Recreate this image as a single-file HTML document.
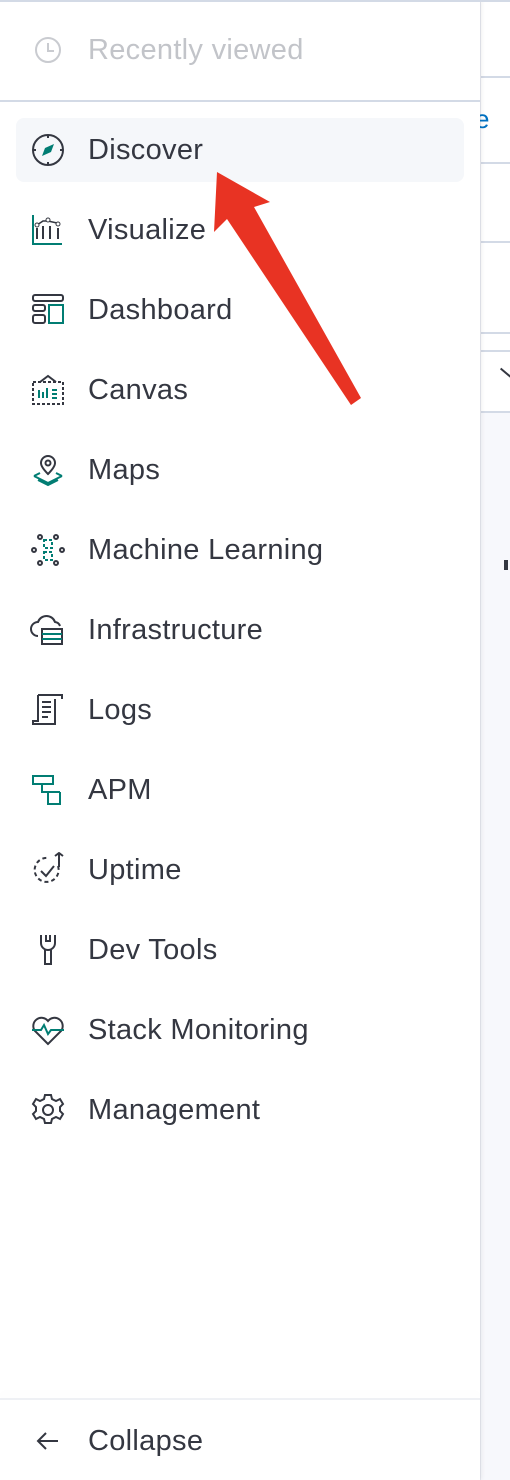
<!DOCTYPE html>
<html><head><meta charset="utf-8"><style>
*{margin:0;padding:0;box-sizing:border-box}
body{width:510px;height:1480px;position:relative;background:#fff;font-family:"Liberation Sans",sans-serif;overflow:hidden}
.side{position:absolute;left:480px;top:0;width:30px;height:1480px;background:#f7f8fc;border-left:1px solid #e6e9f0}
.side .w{position:absolute;left:0;width:30px;background:#fff}
.side .l{position:absolute;left:0;width:30px;height:2px;background:#d3dae6}
.panel{position:absolute;left:0;top:0;width:480px;height:1480px;background:#fff;box-shadow:2px 0 4px rgba(0,0,0,.06)}
.top{position:absolute;top:0;left:0;width:510px;height:2px;background:#d3dae6}
.item{position:absolute;left:0;width:480px;height:64px;display:flex;align-items:center;font-size:29px;letter-spacing:0.3px;color:#343741}
.item svg{position:absolute;left:30px;width:36px;height:36px}
.item span{position:absolute;left:88px}
.hl{position:absolute;left:16px;top:118px;width:448px;height:64px;background:#f5f7fa;border-radius:8px}
</style></head><body>
<div class="side">
<div class="w" style="top:0;height:412px"></div>
<div class="l" style="top:76px"></div>
<div class="l" style="top:162px"></div>
<div class="l" style="top:241px"></div>
<div class="l" style="top:332px"></div>
<div class="l" style="top:350px"></div>
<div class="l" style="top:411px"></div>
<div style="position:absolute;left:-6px;top:104px;color:#0071c2;font-size:26px">e</div>
<div style="position:absolute;left:18px;top:372px;width:14px;height:2px;background:#343741;transform:rotate(40deg)"></div>
<div style="position:absolute;left:23px;top:560px;width:4px;height:10px;background:#343741"></div>
</div>
<div class="panel">
<div style="position:absolute;top:100px;left:0;width:480px;height:2px;background:#d3dae6"></div>
<div class="hl"></div>
<div class="item" style="top:18px;color:#c2c4c9"><svg viewBox="0 0 36 36"><circle cx="18" cy="18" r="12" fill="none" stroke="#c9cbd0" stroke-width="2"/><path d="M18 11v8h6" fill="none" stroke="#c9cbd0" stroke-width="2"/></svg><span>Recently viewed</span></div>
<div class="item" style="top:118px"><svg viewBox="0 0 36 36"><circle cx="18" cy="18" r="15" fill="none" stroke="#343741" stroke-width="2"/><path d="M18 3v3M18 30v3M3 18h3M30 18h3" stroke="#343741" stroke-width="2"/><path d="M24 12l-9 4-3 8 9-4z" fill="#017d73"/></svg><span>Discover</span></div>
<div class="item" style="top:198px"><svg viewBox="0 0 36 36"><path d="M3 3v29h29" fill="none" stroke="#017d73" stroke-width="2"/><path d="M7 16v11M13 14v13M20 14v13M28 16v11" stroke="#343741" stroke-width="2"/><path d="M7 13l6-4 5 0 9 2" fill="none" stroke="#343741" stroke-width="1.5"/><circle cx="7" cy="13" r="2" fill="#fff" stroke="#343741"/><circle cx="18" cy="8" r="2" fill="#fff" stroke="#343741"/><circle cx="28" cy="12" r="2" fill="#fff" stroke="#343741"/></svg><span>Visualize</span></div>
<div class="item" style="top:278px"><svg viewBox="0 0 36 36"><rect x="3" y="3" width="30" height="6" rx="2" fill="none" stroke="#343741" stroke-width="2"/><rect x="3" y="13" width="12" height="6" rx="2" fill="none" stroke="#343741" stroke-width="2"/><rect x="3" y="23" width="12" height="8" rx="2" fill="none" stroke="#343741" stroke-width="2"/><rect x="19" y="13" width="14" height="18" fill="none" stroke="#017d73" stroke-width="2"/></svg><span>Dashboard</span></div>
<div class="item" style="top:358px"><svg viewBox="0 0 36 36"><path d="M3 10h30v22H3z" fill="none" stroke="#343741" stroke-width="2" stroke-dasharray="3 2"/><path d="M10 10l8-6 8 6" fill="none" stroke="#343741" stroke-width="2"/><path d="M9 18v8M13 20v6M17 16v10M22 18h5M22 22h5M22 26h5" stroke="#017d73" stroke-width="2"/></svg><span>Canvas</span></div>
<div class="item" style="top:438px"><svg viewBox="0 0 36 36"><path d="M18 22c-5-5-7-8-7-11a7 7 0 0114 0c0 3-2 6-7 11z" fill="none" stroke="#343741" stroke-width="2"/><circle cx="18" cy="11" r="2.5" fill="none" stroke="#343741" stroke-width="2"/><path d="M4 24l14 7 14-7M4 24l6-3M32 24l-6-3M8 28l10 5 10-5" fill="none" stroke="#017d73" stroke-width="2"/></svg><span>Maps</span></div>
<div class="item" style="top:518px"><svg viewBox="0 0 36 36"><g fill="none" stroke="#343741" stroke-width="2"><circle cx="10" cy="5" r="2"/><circle cx="26" cy="5" r="2"/><circle cx="10" cy="31" r="2"/><circle cx="26" cy="31" r="2"/><circle cx="4" cy="18" r="2"/><circle cx="32" cy="18" r="2"/></g><path d="M14 8h8v8h-8zM14 20h8v8h-8z" fill="none" stroke="#017d73" stroke-width="2" stroke-dasharray="3 2"/></svg><span>Machine Learning</span></div>
<div class="item" style="top:598px"><svg viewBox="0 0 36 36"><path d="M8 24a7 7 0 010-14 9 9 0 0117 0 6 6 0 015 4" fill="none" stroke="#343741" stroke-width="2"/><rect x="12" y="17" width="20" height="15" fill="none" stroke="#343741" stroke-width="2"/><path d="M12 22h20M12 27h20" stroke="#017d73" stroke-width="2"/></svg><span>Infrastructure</span></div>
<div class="item" style="top:678px"><svg viewBox="0 0 36 36"><path d="M8 3h24v4M8 3v26H3v3h22v-3M25 7v22" fill="none" stroke="#343741" stroke-width="2"/><path d="M12 10h9M12 15h9M12 20h9M12 25h6" stroke="#343741" stroke-width="2"/></svg><span>Logs</span></div>
<div class="item" style="top:758px"><svg viewBox="0 0 36 36"><path d="M3 4h20v8H3z" fill="none" stroke="#017d73" stroke-width="2"/><path d="M12 12v8h18M18 20v12h12V20" fill="none" stroke="#017d73" stroke-width="2"/></svg><span>APM</span></div>
<div class="item" style="top:838px"><svg viewBox="0 0 36 36"><path d="M28 14a12 12 0 11-10-8" fill="none" stroke="#343741" stroke-width="2" stroke-dasharray="4 3"/><path d="M11 19l5 5 8-10M25 4l4-3 4 3M29 1v14" fill="none" stroke="#343741" stroke-width="2"/></svg><span>Uptime</span></div>
<div class="item" style="top:918px"><svg viewBox="0 0 36 36"><path d="M11 3v8a7 7 0 0014 0V3M16 3v6h4V3M15 18v14h6V18" fill="none" stroke="#343741" stroke-width="2"/></svg><span>Dev Tools</span></div>
<div class="item" style="top:998px"><svg viewBox="0 0 36 36"><path d="M18 32L5 19a8 8 0 0113-10 8 8 0 0113 10z" fill="none" stroke="#343741" stroke-width="2"/><path d="M2 18h9l3-5 4 9 3-4h13" fill="none" stroke="#017d73" stroke-width="2"/></svg><span>Stack Monitoring</span></div>
<div class="item" style="top:1078px"><svg viewBox="0 0 36 36"><path d="M15 3h6l1 4 4 2 4-2 3 5-3 3v4l3 3-3 5-4-2-4 2-1 4h-6l-1-4-4-2-4 2-3-5 3-3v-4L3 12l3-5 4 2 4-2z" fill="none" stroke="#343741" stroke-width="2"/><circle cx="18" cy="18" r="5" fill="none" stroke="#343741" stroke-width="2"/></svg><span>Management</span></div>
<div style="position:absolute;left:0;top:1398px;width:480px;height:2px;background:#eef0f4;box-shadow:0 -4px 8px rgba(0,0,0,.04)"></div>
<div class="item" style="top:1409px"><svg viewBox="0 0 36 36"><path d="M28 18H8M16 10l-8 8 8 8" fill="none" stroke="#343741" stroke-width="2"/></svg><span>Collapse</span></div>
</div>
<div class="top"></div>
<svg style="position:absolute;left:0;top:0" width="510" height="1480"><polygon points="217,172 270,202 254,207 361,398 351,405 227,219 214,232" fill="#e83323"/></svg>
</body></html>
